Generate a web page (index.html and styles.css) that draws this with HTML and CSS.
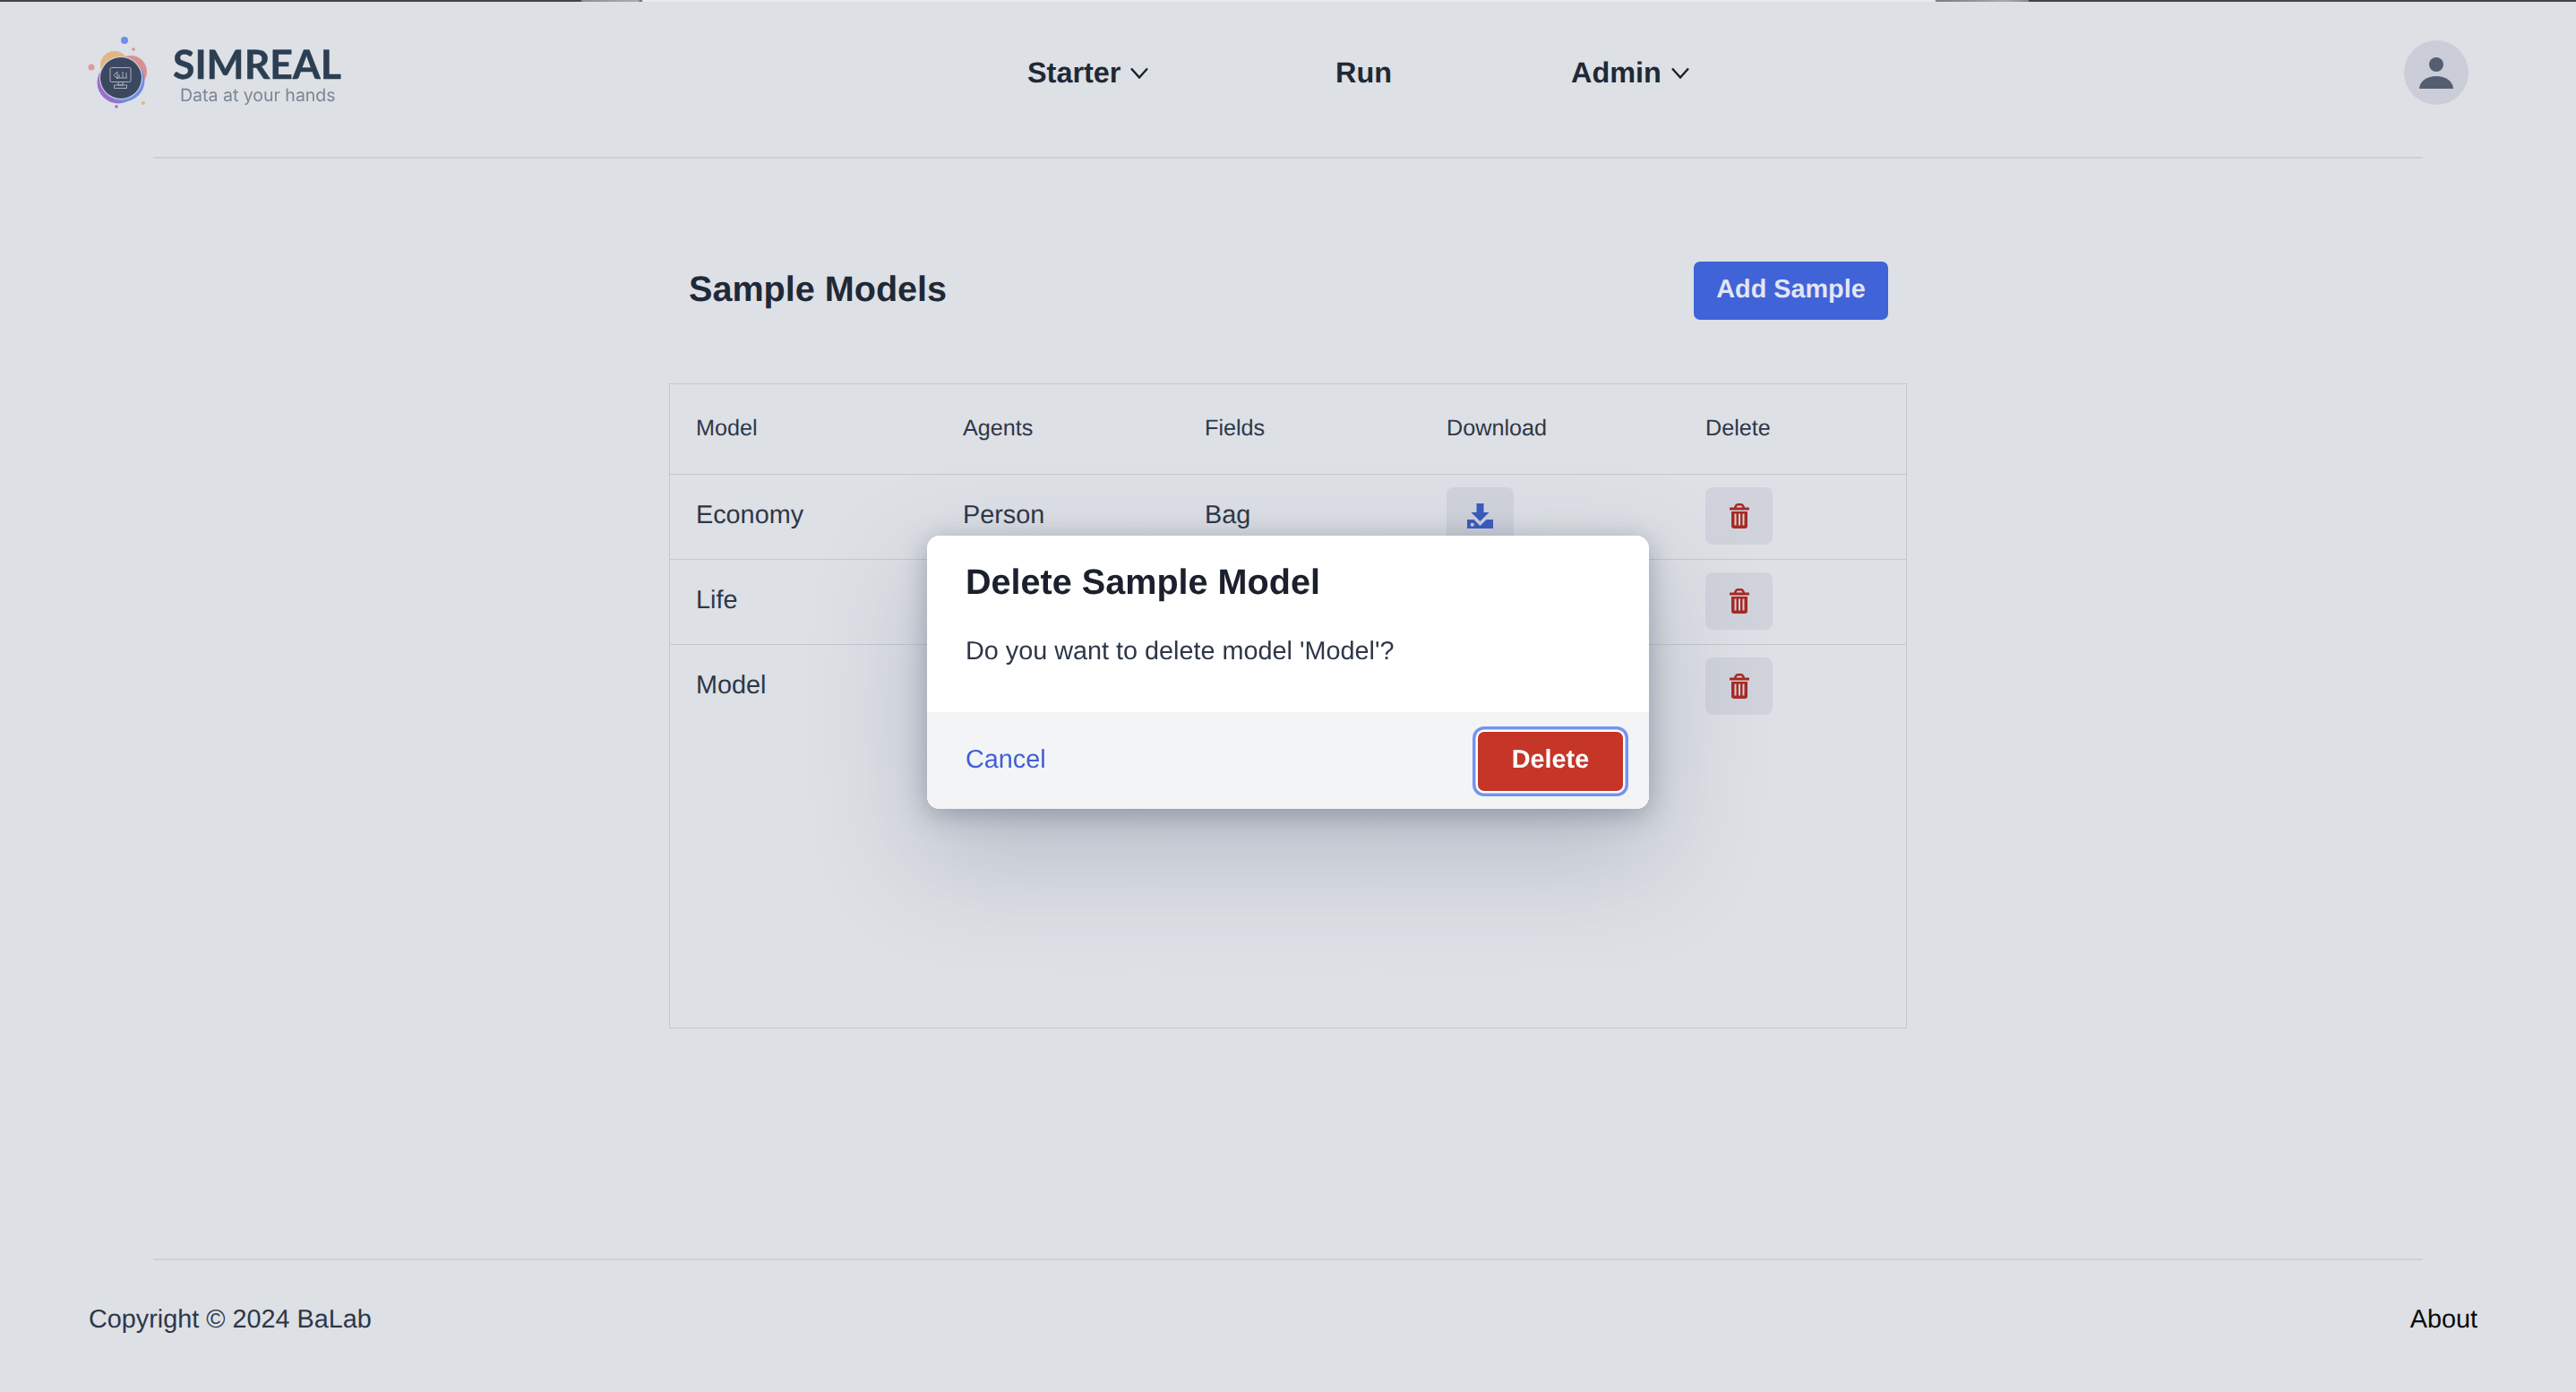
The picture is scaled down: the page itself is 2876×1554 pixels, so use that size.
FILE: index.html
```html
<!DOCTYPE html>
<html lang="en">
<head>
<meta charset="utf-8">
<title>Sample Models</title>
<link rel="stylesheet" href="styles.css">
</head>
<body>
<div class="strip"></div>
<header class="header">
  <div class="brand">
    <svg class="logo" viewBox="95 40 70 85" width="70" height="85">
      <circle cx="128" cy="73" r="16" fill="#e3b582"/>
      <circle cx="146" cy="80" r="18" fill="#d98f93"/>
      <circle cx="132" cy="92" r="23.5" fill="#9a6fd0"/>
      <circle cx="138" cy="90" r="23.5" fill="#6f8fe6"/>
      <circle cx="135" cy="87" r="24" fill="#d5d8e0"/>
      <circle cx="135" cy="87" r="23" fill="#3b4860"/>
      <g fill="none" stroke="#aab2bf" stroke-width="1">
        <rect x="123" y="75.5" width="23" height="16" rx="1.5"/>
        <path d="M127 84l4-4v8zM133 87v-4M137 87v-7M141 87v-6M130 87h12"/>
        <path d="M132 91.500v3.500h5v-3.500M127.500 95h14v3.500h-14z"/>
      </g>
      <circle cx="139" cy="45" r="4" fill="#6f8fe6"/>
      <circle cx="149" cy="55" r="1.800" fill="#d98f93"/>
      <circle cx="102" cy="75" r="3.500" fill="#df9aa0"/>
      <circle cx="160" cy="115" r="2" fill="#e3b582"/>
      <circle cx="130" cy="119" r="1.800" fill="#9a6fd0"/>
    </svg>
    <div class="wordmark">
      <div class="wordmark-name">SIMREAL</div>
      <div class="wordmark-tag">Data at your hands</div>
    </div>
  </div>
  <nav class="nav">
    <a class="nav-item">Starter
      <svg class="chev" viewBox="0 0 20 13" width="20" height="13"><path d="M1 1.500l9 10 9-10"/></svg>
    </a>
    <a class="nav-item">Run</a>
    <a class="nav-item">Admin
      <svg class="chev" viewBox="0 0 20 13" width="20" height="13"><path d="M1 1.500l9 10 9-10"/></svg>
    </a>
  </nav>
  <div class="avatar">
    <svg viewBox="0 0 38 35" width="38" height="35"><circle cx="19" cy="8" r="8"/><path d="M0 35a19 14 0 0 1 38 0z"/></svg>
  </div>
</header>
<hr class="rule">
<main class="main">
  <div class="title-row">
    <h1 class="title">Sample Models</h1>
    <button class="btn-add">Add Sample</button>
  </div>
  <div class="table-box">
    <table class="table">
      <colgroup>
        <col class="c1"><col class="c2"><col class="c3"><col class="c4"><col class="c5">
      </colgroup>
      <thead>
        <tr><th>Model</th><th>Agents</th><th>Fields</th><th>Download</th><th>Delete</th></tr>
      </thead>
      <tbody>
        <tr>
          <td>Economy</td><td>Person</td><td>Bag</td>
          <td><span class="icon-btn"><svg class="i-down" viewBox="0 0 29 28" width="29" height="28"><path d="M10.500 0h8v10h6l-10 10-10-10h6z"/><path fill-rule="evenodd" d="M0 18h7.500l7 7 7-7H29v10H0zM4 22v3.500h3.500V22z"/></svg></span></td>
          <td><span class="icon-btn"><svg class="i-trash" viewBox="0 0 22 28" width="22" height="28"><path fill-rule="evenodd" d="M5 4.500C5.500 1.500 7.500 0 9 0h4c1.500 0 3.500 1.500 4 4.500h4c.6 0 1 .4 1 1v1c0 .6-.4 1-1 1H1c-.6 0-1-.4-1-1v-1c0-.6.4-1 1-1zM7.500 4.500h7C14 3 13 2.500 12.500 2.500h-3C9 2.500 8 3 7.500 4.500z"/><path fill-rule="evenodd" d="M2 9h18v16c0 2-1 3-3 3H5c-2 0-3-1-3-3zM5.500 11.500v13h2v-13zM10 11.500v13h2v-13zM14.500 11.500v13h2v-13z"/></svg></span></td>
        </tr>
        <tr>
          <td>Life</td><td></td><td></td><td></td>
          <td><span class="icon-btn"><svg class="i-trash" viewBox="0 0 22 28" width="22" height="28"><path fill-rule="evenodd" d="M5 4.500C5.500 1.500 7.500 0 9 0h4c1.500 0 3.500 1.500 4 4.500h4c.6 0 1 .4 1 1v1c0 .6-.4 1-1 1H1c-.6 0-1-.4-1-1v-1c0-.6.4-1 1-1zM7.500 4.500h7C14 3 13 2.500 12.500 2.500h-3C9 2.500 8 3 7.500 4.500z"/><path fill-rule="evenodd" d="M2 9h18v16c0 2-1 3-3 3H5c-2 0-3-1-3-3zM5.500 11.500v13h2v-13zM10 11.500v13h2v-13zM14.500 11.500v13h2v-13z"/></svg></span></td>
        </tr>
        <tr>
          <td>Model</td><td></td><td></td><td></td>
          <td><span class="icon-btn"><svg class="i-trash" viewBox="0 0 22 28" width="22" height="28"><path fill-rule="evenodd" d="M5 4.500C5.500 1.500 7.500 0 9 0h4c1.500 0 3.500 1.500 4 4.500h4c.6 0 1 .4 1 1v1c0 .6-.4 1-1 1H1c-.6 0-1-.4-1-1v-1c0-.6.4-1 1-1zM7.500 4.500h7C14 3 13 2.500 12.500 2.500h-3C9 2.500 8 3 7.500 4.500z"/><path fill-rule="evenodd" d="M2 9h18v16c0 2-1 3-3 3H5c-2 0-3-1-3-3zM5.500 11.500v13h2v-13zM10 11.500v13h2v-13zM14.500 11.500v13h2v-13z"/></svg></span></td>
        </tr>
      </tbody>
    </table>
  </div>
</main>
<hr class="rule">
<footer class="footer">
  <span class="copy">Copyright © 2024 BaLab</span>
  <a class="about">About</a>
</footer>
<div class="overlay">
  <div class="dialog">
    <div class="dialog-body">
      <h2 class="dialog-title">Delete Sample Model</h2>
      <p class="dialog-text">Do you want to delete model 'Model'?</p>
    </div>
    <div class="dialog-foot">
      <a class="cancel">Cancel</a>
      <button class="btn-delete">Delete</button>
    </div>
  </div>
</div>
</body>
</html>
```

FILE: styles.css
```css
* { box-sizing: border-box; }
html, body { margin: 0; padding: 0; }
body {
  height: 1554px;
  overflow: hidden;
  background: #dde0e5;
  color: #2d3748;
  font-family: "Liberation Sans", Arial, sans-serif;
  font-size: 28.8px;
  text-rendering: geometricPrecision;
  display: flex;
  flex-direction: column;
}
.strip {
  height: 2px;
  flex: none;
  background: linear-gradient(90deg, #444 0, #444 648px, #8f8f8f 650px, #ababab 712px, #666 716px, #e9eaee 718px, #e9eaee 2160px, #7d7d7d 2162px, #a8a8a8 2240px, #888 2264px, #444 2266px, #444 100%);
}
.header {
  height: 158px;
  flex: none;
  display: flex;
  align-items: center;
  padding-right: 120px;
}
.brand {
  width: 1147px;
  padding-left: 95px;
  display: flex;
  align-items: flex-start;
  flex: none;
  filter: blur(.35px);
}
.logo { flex: none; margin-top: 2px; }
.wordmark { margin-left: 28px; margin-top: 9px; }
.wordmark-name {
  font-family: Lato, sans-serif;
  font-weight: 700;
  font-size: 44.5px;
  line-height: 50px;
  color: #2c3e52;
  -webkit-text-stroke: .5px #2c3e52;
}
.wordmark-tag {
  font-family: Inter, sans-serif;
  font-size: 19.5px;
  line-height: 24px;
  color: #7b8694;
  margin-left: 8px;
  margin-top: -3px;
}
.nav {
  display: grid;
  grid-template-columns: 344px 263px auto;
  align-items: center;
}
.nav-item {
  font-size: 32.4px;
  font-weight: 700;
  color: #1f2937;
  display: flex;
  align-items: center;
  gap: 11px;
}
.chev { flex: none; margin-top: 1px; }
.chev path { fill: none; stroke: #1a202c; stroke-width: 2.4; }
.avatar {
  margin-left: auto;
  width: 72px;
  height: 72px;
  border-radius: 50%;
  background: #cbced8;
  display: flex;
  align-items: center;
  justify-content: center;
}
.avatar svg { fill: #555e70; }
.rule {
  flex: none;
  width: 2534px;
  height: 2px;
  margin: 15px 0 0 171px;
  border: 0;
  background: #cdd0d9;
}
.main {
  flex: 1;
  width: 1382px;
  margin: 0 auto;
  min-height: 0;
}
.title-row {
  display: flex;
  justify-content: space-between;
  align-items: center;
  margin-top: 115px;
  padding: 0 21px 0 22px;
  height: 65px;
}
.title {
  margin: 0 0 2px;
  font-size: 39.6px;
  font-weight: 700;
  color: #1f2937;
}
.btn-add {
  width: 217px;
  height: 65px;
  border: 0;
  border-radius: 7px;
  background: #4063d8;
  color: #e2e6f2;
  font: 700 28.8px "Liberation Sans", Arial, sans-serif;
  text-rendering: geometricPrecision;
  padding: 0 0 3px;
}
.table-box {
  margin-top: 71px;
  height: 720px;
  border: 1px solid #c4c8d2;
}
.table {
  width: 100%;
  border-collapse: collapse;
  table-layout: fixed;
}
.c1 { width: 298px; }
.c2 { width: 270px; }
.c3 { width: 270px; }
.c4 { width: 289px; }
.table th {
  height: 100px;
  padding: 0 0 0 29px;
  text-align: left;
  font-weight: 400;
  font-size: 25.2px;
  color: #2d3748;
  border-bottom: 1px solid #c4c8d2;
}
.table td {
  height: 95px;
  padding: 0 0 3px 29px;
  font-size: 28.8px;
  color: #2d3748;
  vertical-align: middle;
  border-bottom: 1px solid #c4c8d2;
}
.table tbody tr:last-child td { border-bottom: 0; }
.icon-btn {
  width: 75px;
  height: 64px;
  border-radius: 8px;
  background: #d0d3db;
  display: flex;
  align-items: center;
  justify-content: center;
  margin-top: 2px;
}
.i-down { fill: #3b5cbf; }
.i-trash { fill: #a82a24; }
.footer {
  flex: none;
  height: 147px;
  padding: 0 110px 15px 99px;
  display: flex;
  align-items: center;
  justify-content: space-between;
}
.about { color: #0a0a0a; }
.overlay {
  position: fixed;
  inset: 0;
  display: flex;
  justify-content: center;
  padding-top: 598px;
}
.dialog {
  width: 806px;
  height: 305px;
  border-radius: 14px;
  background: #fff;
  display: flex;
  flex-direction: column;
  box-shadow: 0 6px 30px rgba(55, 65, 90, .36), 0 50px 120px 5px rgba(90, 100, 125, .28);
}
.dialog-body {
  flex: 1;
  padding: 29px 43px 0;
}
.dialog-title {
  margin: 0;
  font-size: 39.6px;
  line-height: 46px;
  font-weight: 700;
  color: #1a202c;
}
.dialog-text {
  margin: 32px 0 0;
  line-height: 44px;
  color: #2d3748;
}
.dialog-foot {
  height: 108px;
  flex: none;
  background: #f3f4f6;
  border-radius: 0 0 14px 14px;
  display: flex;
  align-items: center;
  justify-content: space-between;
  padding: 0 29px 2px 43px;
}
.cancel { color: #3f5fd6; }
.btn-delete {
  width: 162px;
  height: 66px;
  margin-top: 3px;
  border: 0;
  border-radius: 7px;
  background: #c53528;
  color: #fff;
  font: 700 28.8px "Liberation Sans", Arial, sans-serif;
  text-rendering: geometricPrecision;
  padding: 0 0 2px;
  box-shadow: 0 0 0 2.500px #fff, 0 0 0 6px #7394f0;
}
```
